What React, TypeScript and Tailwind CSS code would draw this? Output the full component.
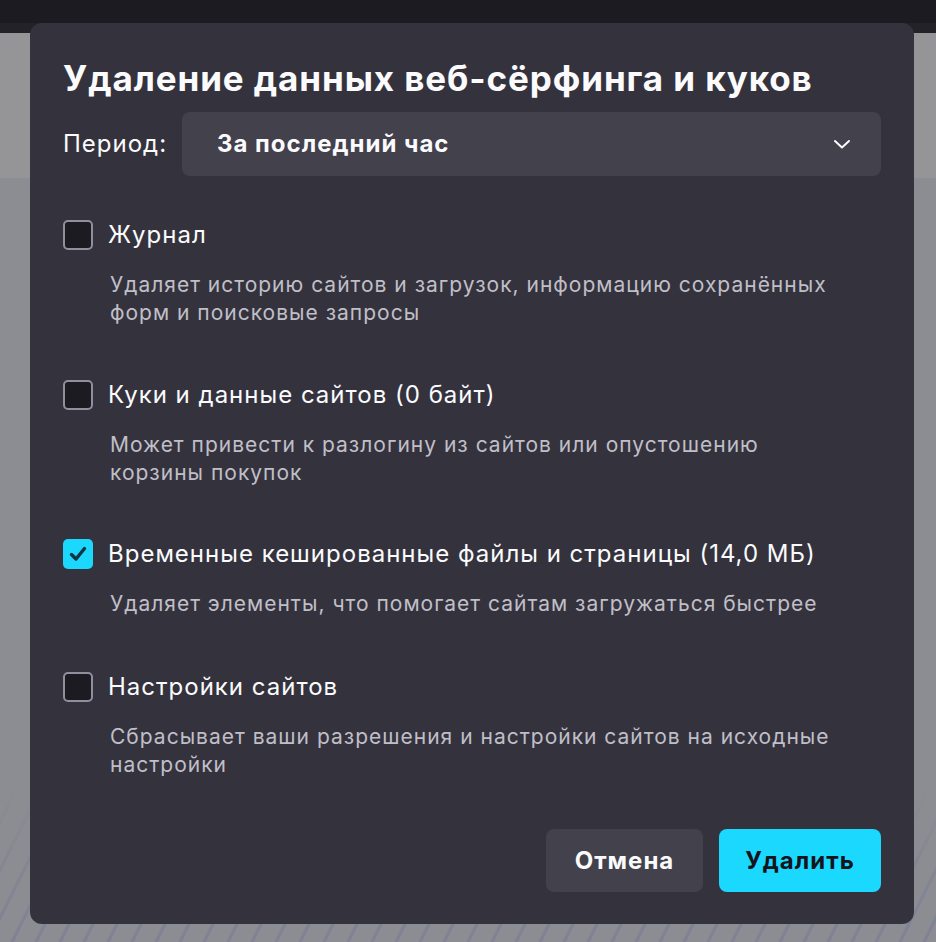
import React from "react";

type Item = {
  label: string;
  lines: string[];
  checked?: boolean;
  gap: string;
};

const items: Item[] = [
  {
    label: "Журнал",
    lines: ["Удаляет историю сайтов и загрузок, информацию сохранённых", "форм и поисковые запросы"],
    gap: "mt-[44px]",
  },
  {
    label: "Куки и данные сайтов (0 байт)",
    lines: ["Может привести к разлогину из сайтов или опустошению", "корзины покупок"],
    gap: "mt-[53px]",
  },
  {
    label: "Временные кешированные файлы и страницы (14,0 МБ)",
    lines: ["Удаляет элементы, что помогает сайтам загружаться быстрее"],
    checked: true,
    gap: "mt-[52px]",
  },
  {
    label: "Настройки сайтов",
    lines: ["Сбрасывает ваши разрешения и настройки сайтов на исходные", "настройки"],
    gap: "mt-[54px]",
  },
];

function Checkbox({ checked }: { checked?: boolean }) {
  if (checked) {
    return (
      <div className="flex h-[30px] w-[30px] shrink-0 items-center justify-center rounded-[5px] bg-[#1bd8ff]">
        <svg width="20" height="20" viewBox="0 0 20 20" fill="none">
          <path d="M3.5 10.5 L8 15 L16.5 4.5" stroke="#143445" strokeWidth="3.4" strokeLinecap="round" strokeLinejoin="round" />
        </svg>
      </div>
    );
  }
  return <div className="h-[30px] w-[30px] shrink-0 rounded-[5px] border-[2.5px] border-[#8f8f9d] bg-[#1c1b22]" />;
}

function Stripes() {
  const lines = [];
  for (let i = 0; i < 44; i++) {
    const x = -60 + i * 24;
    lines.push(<line key={i} x1={x} y1={150} x2={x + 75} y2={0} stroke="#767c96" strokeWidth="3" opacity="0.6" />);
  }
  return (
    <svg className="absolute bottom-0 left-0" width="936" height="150" viewBox="0 0 936 150">
      <defs>
        <linearGradient id="fade" x1="0" y1="0" x2="0" y2="1">
          <stop offset="0" stopColor="white" stopOpacity="0" />
          <stop offset="0.5" stopColor="white" stopOpacity="0.6" />
          <stop offset="1" stopColor="white" stopOpacity="1" />
        </linearGradient>
        <mask id="m">
          <rect width="936" height="150" fill="url(#fade)" />
        </mask>
      </defs>
      <g mask="url(#m)">{lines}</g>
    </svg>
  );
}

export default function App() {
  return (
    <div
      className="relative h-[942px] w-[936px] overflow-hidden bg-[#8c8d92]"
      style={{ fontFamily: "Inter, 'Noto Sans', sans-serif" }}
    >
      {/* page behind the modal */}
      <div className="h-[23px] bg-[#1c1b22]" />
      <div className="h-[10px] bg-[#232229]" />
      <div className="h-[145px] bg-[#959597]" />
      <Stripes />

      {/* dialog */}
      <div className="absolute left-[30px] top-[23px] flex h-[901px] w-[884px] flex-col rounded-[12px] bg-[#34333d] px-[33px] pt-[35px] text-[#fbfbfe]">
        <h1 className="text-[35px] font-bold leading-[40px] tracking-[0.9px]">
          Удаление данных веб-сёрфинга и куков
        </h1>

        <div className="mt-[14px] flex items-center">
          <span className="w-[119px] text-[24px] tracking-[1px]">Период:</span>
          <div className="flex h-[64px] flex-1 items-center justify-between rounded-[8px] bg-[#42414c] pl-[35px] pr-[30px]">
            <span className="text-[24px] font-bold tracking-[1px]">За последний час</span>
            <svg width="18" height="12" viewBox="0 0 18 12" fill="none">
              <path d="M2 3 L9 9.5 L16 3" stroke="#fbfbfe" strokeWidth="2" strokeLinecap="round" strokeLinejoin="round" />
            </svg>
          </div>
        </div>

        {items.map((it) => (
          <div key={it.label} className={it.gap}>
            <div className="flex items-center gap-[15px]">
              <Checkbox checked={it.checked} />
              <span className="text-[24px] leading-[30px] tracking-[1px]">{it.label}</span>
            </div>
            <div className="mt-[21px] pl-[47px] text-[21px] leading-[28px] tracking-[1px] text-[#c0bfc8]">
              {it.lines.map((l) => (
                <div key={l}>{l}</div>
              ))}
            </div>
          </div>
        ))}

        <div className="mt-auto mb-[32px] flex justify-end gap-[16px]">
          <button className="h-[63px] w-[157px] rounded-[8px] bg-[#42414c] text-[24px] font-bold tracking-[1px] text-[#fbfbfe]">
            Отмена
          </button>
          <button className="h-[63px] w-[162px] rounded-[8px] bg-[#1bd8ff] text-[24px] font-bold tracking-[1px] text-[#15141a]">
            Удалить
          </button>
        </div>
      </div>
    </div>
  );
}
